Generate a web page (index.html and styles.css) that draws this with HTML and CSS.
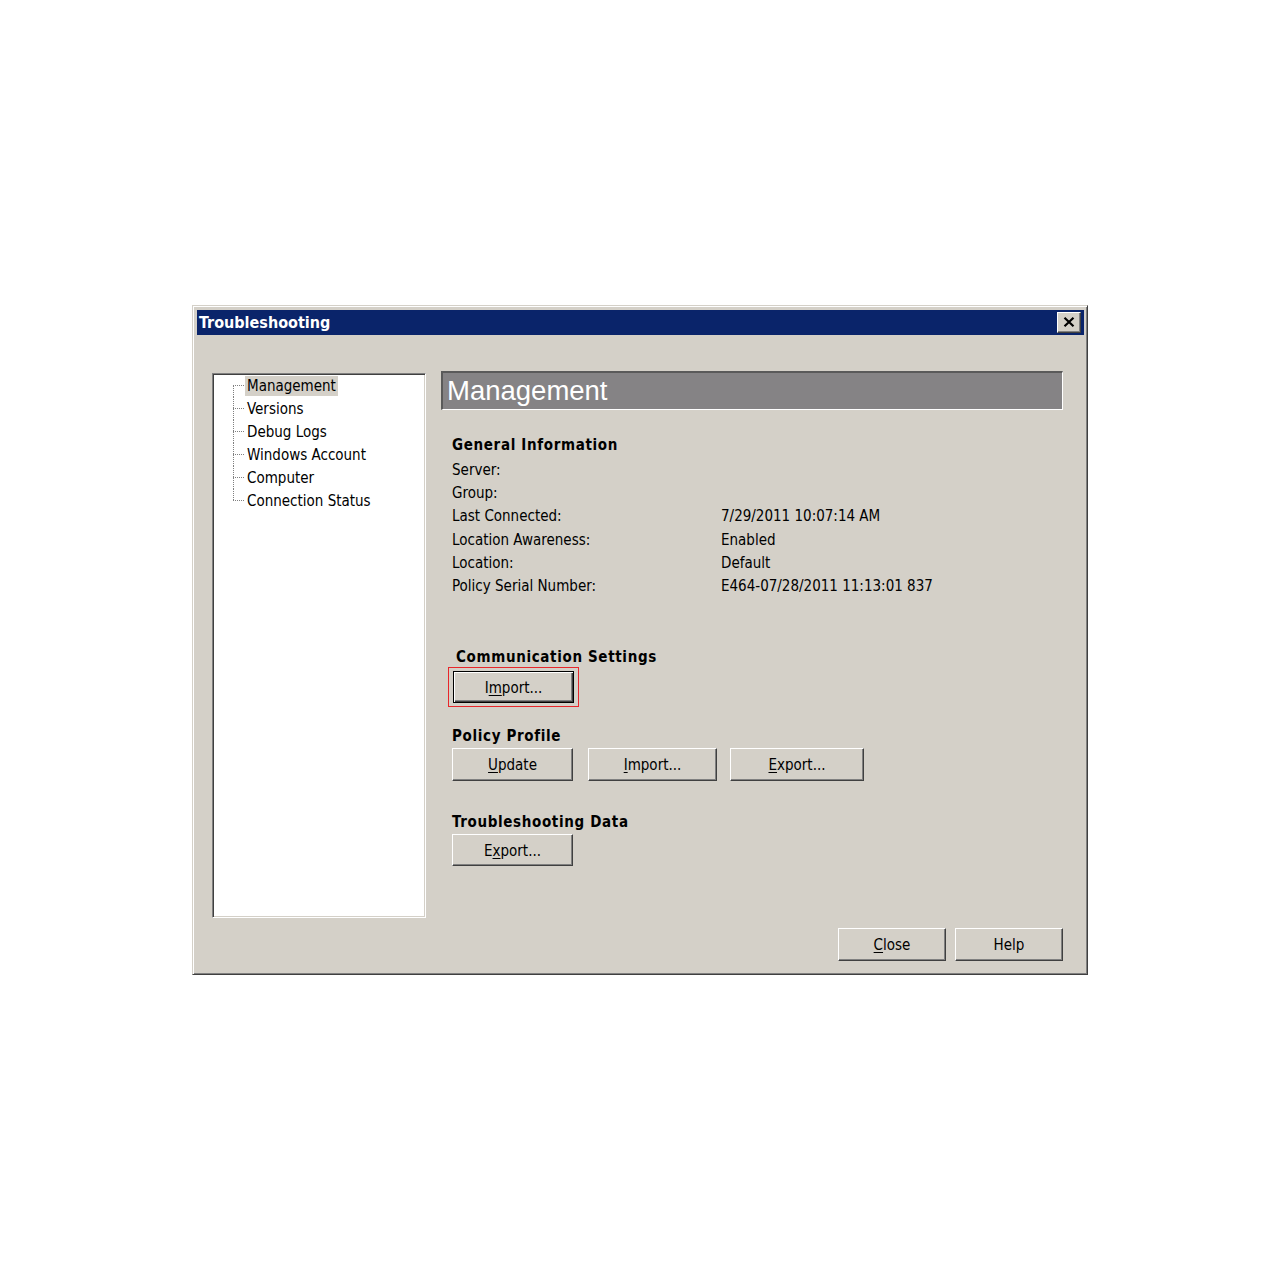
FILE: index.html
```html
<!DOCTYPE html>
<html lang="en">
<head>
<meta charset="utf-8">
<title>Troubleshooting</title>
<link rel="stylesheet" href="styles.css">
</head>
<body>
<div class="window">
  <div class="titlebar">
    <span class="title">Troubleshooting</span>
    <button class="tb-close" aria-label="Close">
      <svg width="12" height="10" viewBox="0 0 12 10"><path d="M1.5 0.8 L10.5 9.2 M10.5 0.8 L1.5 9.2" stroke="#000" stroke-width="2.2" fill="none"/></svg>
    </button>
  </div>
  <div class="client">
    <div class="main">
      <ul class="tree">
        <li class="first"><span class="label selected">Management</span></li>
        <li><span class="label">Versions</span></li>
        <li><span class="label">Debug Logs</span></li>
        <li><span class="label">Windows Account</span></li>
        <li><span class="label">Computer</span></li>
        <li class="last"><span class="label">Connection Status</span></li>
      </ul>
      <div class="pane">
        <div class="banner">Management</div>
        <div class="heading gi">General Information</div>
        <div class="info">
          <div>Server:</div><div></div>
          <div>Group:</div><div></div>
          <div>Last Connected:</div><div>7/29/2011 10:07:14 AM</div>
          <div>Location Awareness:</div><div>Enabled</div>
          <div>Location:</div><div>Default</div>
          <div>Policy Serial Number:</div><div>E464-07/28/2011 11:13:01 837</div>
        </div>
        <div class="heading cs">Communication Settings</div>
        <div class="highlight">
          <button class="btn default w121">I<u>m</u>port...</button>
        </div>
        <div class="heading pp">Policy Profile</div>
        <div class="btnrow pp-row">
          <button class="btn tall w121"><u>U</u>pdate</button>
          <button class="btn tall w129"><u>I</u>mport...</button>
          <button class="btn tall w134"><u>E</u>xport...</button>
        </div>
        <div class="heading td">Troubleshooting Data</div>
        <div class="btnrow td-row">
          <button class="btn w121">E<u>x</u>port...</button>
        </div>
      </div>
    </div>
    <div class="footer">
      <button class="btn tall w108"><u>C</u>lose</button>
      <button class="btn tall w108">Help</button>
    </div>
  </div>
</div>
</body>
</html>
```
FILE: styles.css
```css
html, body {
  margin: 0;
  padding: 0;
  background: #ffffff;
}

body {
  font-family: "DejaVu Sans Condensed", "DejaVu Sans", sans-serif;
  font-size: 15px;
  color: #000;
}

.window {
  box-sizing: border-box;
  width: 896px;
  height: 670px;
  margin: 305px 0 0 192px;
  background: #d4d0c8;
  border: 1px solid;
  border-color: #d4d0c8 #404040 #404040 #d4d0c8;
  box-shadow: inset 1px 1px #ffffff, inset -1px -1px #808080;
  padding: 4px 3px 3px 4px;
  display: flex;
  flex-direction: column;
}

.titlebar {
  height: 25px;
  flex: none;
  background: #0a246a;
  display: flex;
  align-items: center;
  justify-content: space-between;
  padding: 0 3px 0 2px;
}

.title {
  color: #fff;
  font-weight: bold;
  font-size: 16px;
}

.tb-close {
  box-sizing: border-box;
  width: 24px;
  height: 21px;
  margin-bottom: 1px;
  padding: 0;
  background: #d4d0c8;
  border: 1px solid;
  border-color: #fff #404040 #404040 #fff;
  box-shadow: inset -1px -1px #808080;
  display: flex;
  align-items: center;
  justify-content: center;
}

.client {
  flex: 1;
  padding: 38px 21px 10px 15px;
  display: flex;
  flex-direction: column;
}

.main {
  display: flex;
  gap: 15px;
  height: 545px;
  flex: none;
}

.tree {
  box-sizing: border-box;
  width: 214px;
  height: 545px;
  margin: 0;
  padding: 0;
  list-style: none;
  background: #fff;
  border: 1px solid;
  border-color: #808080 #ffffff #ffffff #808080;
  box-shadow: inset 1px 1px #404040, inset -1px -1px #d4d0c8;
}

.tree li {
  height: 23px;
  display: flex;
  align-items: center;
  background: repeating-linear-gradient(to bottom, #808080 0 1px, transparent 1px 2px) 20px 0 / 1px 100% no-repeat;
}

.tree li.first {
  background-position: 20px 100%;
  background-size: 1px 50%;
}

.tree li.last {
  background-position: 20px 0;
  background-size: 1px 50%;
}

.tree li::before {
  content: "";
  width: 12px;
  height: 1px;
  margin-left: 20px;
  flex: none;
  background: repeating-linear-gradient(to right, #808080 0 1px, transparent 1px 2px);
}

.label {
  padding: 1px 2px 0;
  line-height: 19px;
  white-space: nowrap;
}

.label.selected {
  background: #d4d0c8;
}

.pane {
  flex: 1;
  margin-top: -2px;
  display: flex;
  flex-direction: column;
  align-items: flex-start;
}

.banner {
  box-sizing: border-box;
  align-self: stretch;
  height: 39px;
  background: #858385;
  border-style: solid;
  border-width: 2px 1px 1px 2px;
  border-color: #5a5a5a #ffffff #ffffff #5a5a5a;
  color: #fff;
  font-family: "Liberation Sans", Arial, sans-serif;
  font-size: 27.5px;
  line-height: 35px;
  padding-left: 4px;
}

.heading {
  font-weight: bold;
  line-height: 23px;
  letter-spacing: 0.65px;
  margin-left: 11px;
}

.gi { margin-top: 24px; }
.cs { margin-top: 48px; margin-left: 15px; }
.pp { margin-top: 18px; }
.td { margin-top: 30px; }

.info {
  margin-top: 2px;
  margin-left: 11px;
  display: grid;
  grid-template-columns: 269px auto;
  grid-auto-rows: 23.2px;
  line-height: 23px;
  white-space: nowrap;
}

.highlight {
  margin-left: 7px;
  margin-top: -2px;
  border: 1px solid #e8262a;
  padding: 3px 4px;
  display: flex;
}

.btnrow {
  margin-left: 11px;
  display: flex;
}

.pp-row { margin-top: 0; }
.td-row { margin-top: 0; }

.btnrow .w129 { margin-left: 15px; }
.btnrow .w134 { margin-left: 13px; }

.btn {
  box-sizing: border-box;
  height: 32px;
  padding: 1px 0 0;
  font-family: inherit;
  font-size: 15px;
  color: #000;
  background: #d4d0c8;
  border: 1px solid;
  border-color: #ffffff #404040 #404040 #ffffff;
  box-shadow: inset -1px -1px #808080;
  text-align: center;
}

.btn.tall { height: 33px; }

.btn.default {
  border-color: #000;
  box-shadow: inset 1px 1px #ffffff, inset -1px -1px #404040, inset -2px -2px #808080;
}

.btn u {
  text-underline-offset: 2px;
}

.w108 { width: 108px; }
.w121 { width: 121px; }
.w129 { width: 129px; }
.w134 { width: 134px; }

.footer {
  margin-top: 10px;
  display: flex;
  justify-content: flex-end;
  gap: 9px;
}
```
